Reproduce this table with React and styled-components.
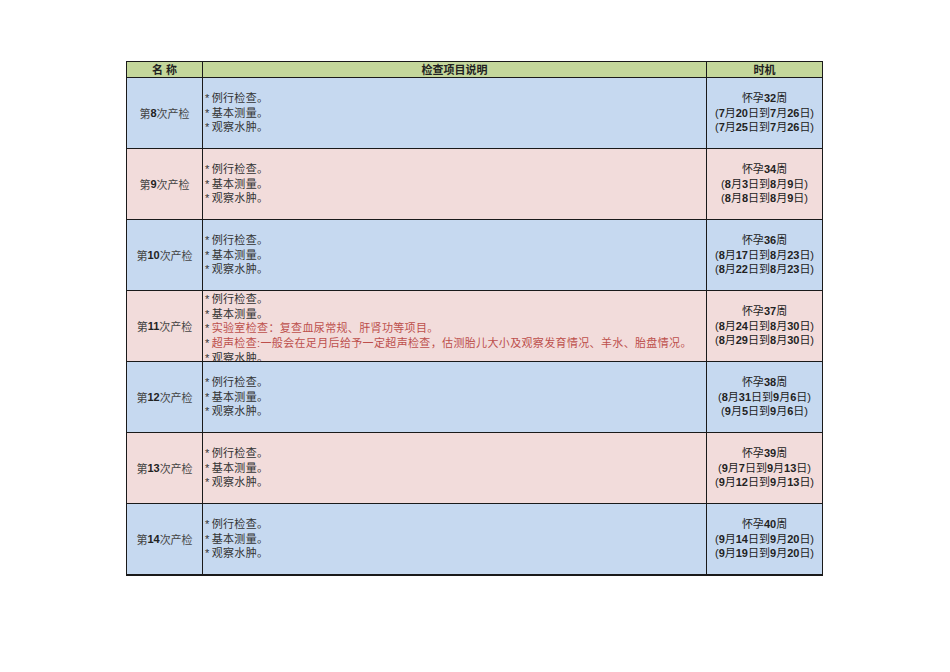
import React from 'react';
import styled, { createGlobalStyle } from 'styled-components';

const GlobalStyle = createGlobalStyle`
  html, body {
    margin: 0;
    padding: 0;
    background: #fff;
  }
  body {
    font-family: "Liberation Sans", "Noto Sans CJK SC", sans-serif;
  }
`;

const visits = [
  { no: 8, week: 32, a: '(7月20日到7月26日)', b: '(7月25日到7月26日)' },
  { no: 9, week: 34, a: '(8月3日到8月9日)', b: '(8月8日到8月9日)' },
  { no: 10, week: 36, a: '(8月17日到8月23日)', b: '(8月22日到8月23日)' },
  { no: 11, week: 37, a: '(8月24日到8月30日)', b: '(8月29日到8月30日)', extra: true },
  { no: 12, week: 38, a: '(8月31日到9月6日)', b: '(9月5日到9月6日)' },
  { no: 13, week: 39, a: '(9月7日到9月13日)', b: '(9月12日到9月13日)' },
  { no: 14, week: 40, a: '(9月14日到9月20日)', b: '(9月19日到9月20日)' },
];

// digits look heavier than the CJK text in the sheet
const withNums = text =>
  text.split(/(\d+)/).map((part, i) => (/^\d+$/.test(part) ? <Num key={i}>{part}</Num> : part));

const App = () => {
  return (
    <Page>
      <GlobalStyle />
      <Sheet>
        <HeadCell>名 称</HeadCell>
        <HeadCell>检查项目说明</HeadCell>
        <HeadCell>时机</HeadCell>
        {visits.map((v, i) => {
          const tone = i % 2 === 0 ? 'blue' : 'pink';
          return (
            <React.Fragment key={v.no}>
              <NameCell tone={tone}>{withNums(`第${v.no}次产检`)}</NameCell>
              <DescCell tone={tone} overflowing={v.extra}>
                <Line><Star>*</Star>例行检查。</Line>
                <Line><Star>*</Star>基本测量。</Line>
                {v.extra && (
                  <>
                    <Line red><Star>*</Star>实验室检查：复查血尿常规、肝肾功等项目。</Line>
                    <Line red><Star>*</Star>超声检查:一般会在足月后给予一定超声检查，估测胎儿大小及观察发育情况、羊水、胎盘情况。</Line>
                  </>
                )}
                <Line><Star>*</Star>观察水肿。</Line>
              </DescCell>
              <TimeCell tone={tone}>
                <Line>{withNums(`怀孕${v.week}周`)}</Line>
                <Line>{withNums(v.a)}</Line>
                <Line>{withNums(v.b)}</Line>
              </TimeCell>
            </React.Fragment>
          );
        })}
      </Sheet>
    </Page>
  );
};

export default App;

const Page = styled.div`
  width: 950px;
  height: 672px;
  padding: 61px 0 0 126px;
  box-sizing: border-box;
`;

const Sheet = styled.div`
  display: grid;
  grid-template-columns: 76px 504px 116px;
  grid-template-rows: 16px repeat(7, 71px);
  width: 696px;
  border-top: 1px solid #1a1a1a;
  border-left: 1px solid #1a1a1a;
  border-bottom: 1px solid #1a1a1a;
  box-sizing: content-box;
`;

const bg = {
  blue: '#c6d9f0',
  pink: '#f2dcdb',
};

const Cell = styled.div`
  border-right: 1px solid #1a1a1a;
  border-bottom: 1px solid #1a1a1a;
  box-sizing: border-box;
  font-size: 11px;
  color: #333;
  overflow: hidden;
`;

const HeadCell = styled(Cell)`
  background: #c4d79b;
  font-weight: bold;
  color: #222;
  display: flex;
  align-items: center;
  justify-content: center;
  line-height: 14px;
`;

const NameCell = styled(Cell)`
  background: ${p => bg[p.tone]};
  display: flex;
  align-items: center;
  justify-content: center;
  color: #444;
`;

const DescCell = styled(Cell)`
  background: ${p => bg[p.tone]};
  display: flex;
  flex-direction: column;
  justify-content: ${p => (p.overflowing ? 'flex-start' : 'center')};
  padding: ${p => (p.overflowing ? '1px' : '0')} 0 0 2px;
  letter-spacing: 0.35px;
`;

const TimeCell = styled(Cell)`
  background: ${p => bg[p.tone]};
  display: flex;
  flex-direction: column;
  justify-content: center;
  align-items: center;
  color: #222;
`;

const Line = styled.div`
  line-height: 14.7px;
  white-space: nowrap;
  color: ${p => (p.red ? '#bd4f4b' : 'inherit')};
`;

const Star = styled.span`
  margin-right: 2px;
  color: #333;
`;

const Num = styled.span`
  font-weight: bold;
  color: #222;
`;
